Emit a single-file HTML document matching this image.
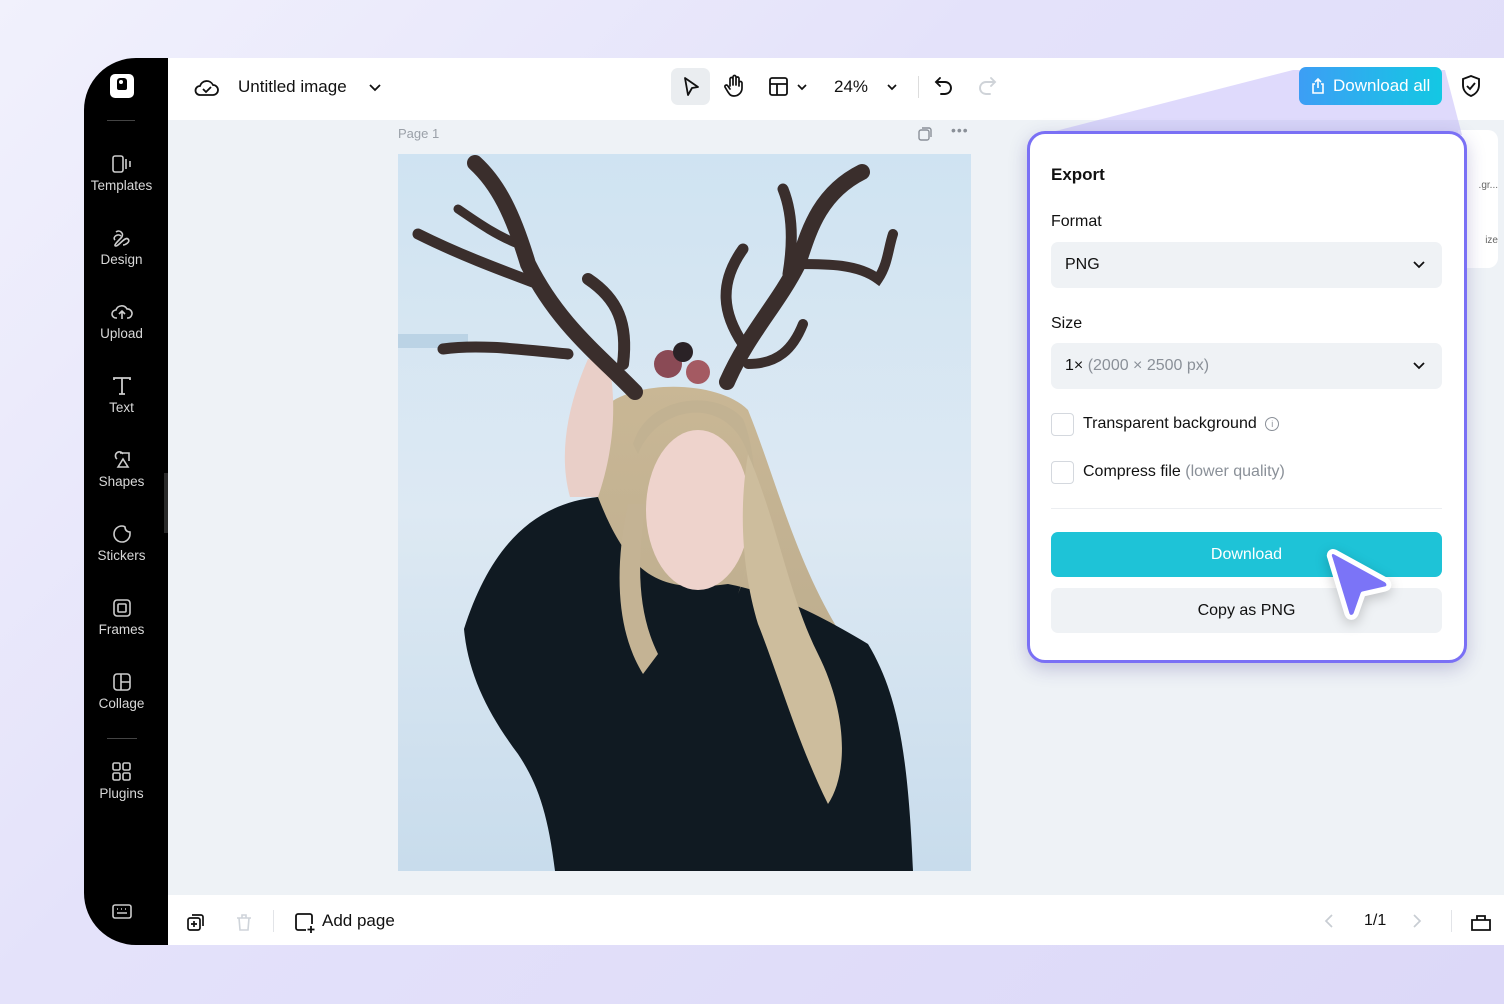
<!DOCTYPE html>
<html><head><meta charset="utf-8"><style>
*{box-sizing:border-box;margin:0;padding:0}
body{width:1504px;height:1004px;overflow:hidden;font-family:"Liberation Sans",sans-serif;background:linear-gradient(135deg,#f1f1fc 0%,#e4e2fa 40%,#dcd8f8 100%);position:relative;color:#111}
.abs{position:absolute}
.side{left:84px;top:58px;width:84px;height:887px;background:#000;border-radius:52px 0 0 52px}
.nav{position:absolute;left:0;width:75px;text-align:center;color:#d8d8d8;font-size:13.5px}
.nav svg{display:block;margin:0 auto 4px}
.top{left:168px;top:58px;width:1336px;height:62px;background:#fff}
.canvas{left:168px;top:120px;width:1336px;height:775px;background:#eef2f6}
.bottom{left:168px;top:895px;width:1336px;height:50px;background:#fff}
.panel{left:1027px;top:131px;width:440px;height:532px;background:#fff;border:3px solid #7a70f5;border-radius:18px;box-shadow:0 6px 18px rgba(60,50,140,.25)}
.sel{position:absolute;left:21px;width:391px;height:46px;background:#eff2f5;border-radius:7px;font-size:16px;line-height:46px;padding-left:14px}
.chk{position:absolute;left:21px;width:23px;height:23px;border:1.5px solid #d4d8de;border-radius:4px}
.lbl{position:absolute;left:53px;font-size:16px}
</style></head><body>
<div class="abs side">
  <div class="abs" style="left:26px;top:16px;width:24px;height:24px;background:#fff;border-radius:5px"><div style="position:absolute;left:7px;top:4px;width:10px;height:12px;background:#000;border-radius:3px 3px 2px 2px"></div><div style="position:absolute;left:9px;top:6px;width:4px;height:4px;background:#fff;border-radius:50%"></div></div>
  <div class="abs" style="left:23px;top:62px;width:28px;height:1px;background:#444"></div>
  <div class="nav" style="top:96px"><svg width="22" height="20" viewBox="0 0 22 20" fill="none" stroke="#ccc" stroke-width="1.6"><rect x="2" y="2" width="10" height="16" rx="2"/><path d="M15 5v10M19 7v6"/></svg>Templates</div>
  <div class="nav" style="top:170px"><svg width="22" height="20" viewBox="0 0 22 20" fill="none" stroke="#ccc" stroke-width="1.6"><path d="M5 4c4-3 9 2 5 6s-8 8-5 8 9-10 12-7-3 6-5 6M4 12c-3-3 3-7 6-4"/></svg>Design</div>
  <div class="nav" style="top:244px"><svg width="24" height="20" viewBox="0 0 24 20" fill="none" stroke="#ccc" stroke-width="1.6"><path d="M7 16H6a4 4 0 010-8 6 6 0 0111-1 4 4 0 011 9h-1M12 17V9M9 12l3-3 3 3"/></svg>Upload</div>
  <div class="nav" style="top:318px"><svg width="22" height="20" viewBox="0 0 22 20" fill="none" stroke="#ccc" stroke-width="1.8"><path d="M3 4V2h16v2M11 2v16M8 18h6"/></svg>Text</div>
  <div class="nav" style="top:392px"><svg width="22" height="20" viewBox="0 0 22 20" fill="none" stroke="#ccc" stroke-width="1.6"><path d="M6 9a4 4 0 116-5M9 3h9v8M7 17l5-8 5 8z"/></svg>Shapes</div>
  <div class="nav" style="top:466px"><svg width="22" height="20" viewBox="0 0 22 20" fill="none" stroke="#ccc" stroke-width="1.6"><path d="M19 10a8 8 0 11-8-8c1 0 2 0 3 1 0 3 2 5 5 5z"/></svg>Stickers</div>
  <div class="nav" style="top:540px"><svg width="22" height="20" viewBox="0 0 22 20" fill="none" stroke="#ccc" stroke-width="1.6"><rect x="3" y="2" width="16" height="16" rx="3"/><rect x="7" y="6" width="8" height="8" rx="1"/></svg>Frames</div>
  <div class="nav" style="top:614px"><svg width="22" height="20" viewBox="0 0 22 20" fill="none" stroke="#ccc" stroke-width="1.6"><rect x="3" y="2" width="16" height="16" rx="3"/><path d="M10 2v16M10 10h9"/></svg>Collage</div>
  <div class="abs" style="left:23px;top:680px;width:30px;height:1px;background:#444"></div>
  <div class="nav" style="top:704px"><svg width="22" height="20" viewBox="0 0 22 20" fill="none" stroke="#ccc" stroke-width="1.6"><rect x="2" y="1" width="7" height="7" rx="1.5"/><rect x="12" y="1" width="7" height="7" rx="1.5"/><rect x="2" y="11" width="7" height="7" rx="1.5"/><rect x="12" y="11" width="7" height="7" rx="1.5"/></svg>Plugins</div>
  <svg class="abs" style="left:27px;top:845px" width="22" height="18" viewBox="0 0 22 18" fill="none" stroke="#ccc" stroke-width="1.6"><rect x="2" y="2" width="18" height="13" rx="2"/><path d="M6 6h1M10 6h1M14 6h1M6 10h10"/></svg>
</div>
<div class="abs" style="left:164px;top:473px;width:11px;height:60px;background:#2a2a2a;border-radius:0 8px 8px 0"></div>
<div class="abs top">
  <svg class="abs" style="left:26px;top:18px" width="26" height="22" viewBox="0 0 26 22" fill="none" stroke="#111" stroke-width="1.8"><path d="M7 19H6a4.5 4.5 0 010-9 7 7 0 0113-1 5 5 0 010 10z"/><path d="M9 13l3 3 5-5"/></svg>
  <div class="abs" style="left:70px;top:19px;font-size:17px;font-weight:500">Untitled image</div>
  <svg class="abs" style="left:200px;top:22px" width="14" height="14" viewBox="0 0 14 14" fill="none" stroke="#111" stroke-width="1.8"><path d="M2 5l5 5 5-5"/></svg>
  <div class="abs" style="left:503px;top:10px;width:39px;height:37px;background:#eaedf0;border-radius:7px"></div>
  <svg class="abs" style="left:512px;top:17px" width="22" height="24" viewBox="0 0 22 24" fill="none" stroke="#111" stroke-width="1.8" stroke-linejoin="round"><path d="M5 3l13 9-6 1-4 7z"/></svg>
  <svg class="abs" style="left:555px;top:16px" width="22" height="24" viewBox="0 0 22 24" fill="none" stroke="#111" stroke-width="1.7" stroke-linecap="round"><path d="M7 12V5a1.5 1.5 0 013 0v6M10 10V3a1.5 1.5 0 013 0v8M13 10V4.5a1.5 1.5 0 013 0V12M16 9a1.5 1.5 0 013 0v5a8 8 0 01-8 8c-3 0-4-1-6-4l-3-5a1.5 1.5 0 012.5-1.5L7 15"/></svg>
  <svg class="abs" style="left:600px;top:18px" width="22" height="22" viewBox="0 0 22 22" fill="none" stroke="#111" stroke-width="1.8"><rect x="2" y="2" width="17" height="17" rx="2"/><path d="M2 8h17M9 8v11"/></svg>
  <svg class="abs" style="left:628px;top:23px" width="12" height="12" viewBox="0 0 12 12" fill="none" stroke="#111" stroke-width="1.7"><path d="M2 4l4 4 4-4"/></svg>
  <div class="abs" style="left:666px;top:19px;font-size:17px;font-weight:500">24%</div>
  <svg class="abs" style="left:718px;top:23px" width="12" height="12" viewBox="0 0 12 12" fill="none" stroke="#111" stroke-width="1.7"><path d="M2 4l4 4 4-4"/></svg>
  <div class="abs" style="left:750px;top:18px;width:1px;height:22px;background:#ddd"></div>
  <svg class="abs" style="left:765px;top:17px" width="22" height="22" viewBox="0 0 22 22" fill="none" stroke="#111" stroke-width="1.9" stroke-linecap="round"><path d="M7 3L3 7l4 4M3 7h9a6 6 0 010 12H8"/></svg>
  <svg class="abs" style="left:808px;top:17px" width="22" height="22" viewBox="0 0 22 22" fill="none" stroke="#cfd3d8" stroke-width="1.9" stroke-linecap="round"><path d="M15 3l4 4-4 4M19 7h-9a6 6 0 000 12h4"/></svg>
  <svg class="abs" style="left:1292px;top:16px" width="22" height="24" viewBox="0 0 22 24" fill="none" stroke="#111" stroke-width="1.9"><path d="M11 2l8 3v6c0 5-3 9-8 11-5-2-8-6-8-11V5z"/><path d="M7 12l3 3 5-6"/></svg>
</div>
<div class="abs canvas">
  <div class="abs" style="left:230px;top:6px;font-size:13px;color:#9aa0a8">Page 1</div>
  <svg class="abs" style="left:748px;top:5px" width="18" height="18" viewBox="0 0 18 18" fill="none" stroke="#8a9098" stroke-width="1.4"><rect x="3" y="5" width="10" height="10" rx="2"/><path d="M6 3h7a2 2 0 012 2v7"/></svg>
  <div class="abs" style="left:783px;top:2px;font-size:14px;color:#8a9098;letter-spacing:1px">•••</div>
  <div class="abs" style="left:1290px;top:10px;width:40px;height:138px;background:#fff;border-radius:0 10px 10px 0;font-size:10px;color:#666;padding-top:50px;text-align:right">.gr...<br><br><br><br><br>ize</div>
</div>
<svg class="abs" style="left:398px;top:154px" width="573" height="717" viewBox="0 0 573 717" preserveAspectRatio="none">
  <defs><linearGradient id="bg" x1="0" y1="0" x2="0" y2="1"><stop offset="0" stop-color="#cfe3f2"/><stop offset=".5" stop-color="#dde9f3"/><stop offset="1" stop-color="#c8dcec"/></linearGradient>
  <linearGradient id="hr" x1="0" y1="0" x2="0" y2="1"><stop offset="0" stop-color="#c9b795"/><stop offset="1" stop-color="#b8a98c"/></linearGradient></defs>
  <rect width="573" height="717" fill="url(#bg)"/>
  <rect x="0" y="180" width="70" height="14" fill="#9fc0d8" opacity=".5"/>
  <path d="M204 256 C230 225 320 225 350 256 C380 330 400 420 456 500 C470 560 460 600 456 640 L230 560 C200 450 190 330 204 256Z" fill="url(#hr)"/>
  <path d="M66 475 C90 400 130 350 200 343 C230 420 260 440 330 430 C380 440 420 460 470 490 C500 540 510 600 515 717 L157 717 C150 660 140 630 120 600 C90 560 70 520 66 475Z" fill="#101a22"/>
  <path d="M172 343 C160 300 170 250 190 205 L210 205 C220 250 215 300 200 343Z" fill="#e9cfc8"/>
  <ellipse cx="300" cy="356" rx="52" ry="80" fill="#eed3cc"/>
  <path d="M240 300 C260 250 330 240 350 300 C360 340 355 400 340 440 C365 380 360 300 345 265 C320 235 250 240 235 290Z" fill="#c2b292"/>
  <path d="M350 300 C380 370 390 440 420 500 C450 560 450 620 430 650 C400 590 380 520 360 470 C345 420 340 360 350 300Z" fill="#cdbd9d"/>
  <path d="M230 350 C215 420 220 480 245 520 L260 500 C240 460 238 410 248 350Z" fill="#c4b394"/>
  <g fill="none" stroke="#3a2e2c" stroke-linecap="round">
    <path d="M237 238 C200 200 160 170 130 110 C115 60 100 30 77 9" stroke-width="16"/>
    <path d="M170 200 C120 195 80 190 45 195" stroke-width="11"/>
    <path d="M140 130 C100 115 60 100 20 80" stroke-width="11"/>
    <path d="M120 90 C95 80 75 65 60 55" stroke-width="9"/>
    <path d="M225 210 C230 170 220 145 190 125" stroke-width="12"/>
    <path d="M329 228 C350 180 380 150 400 110 C410 80 420 40 464 18" stroke-width="16"/>
    <path d="M345 190 C325 160 320 130 345 95" stroke-width="11"/>
    <path d="M390 120 C395 90 395 60 385 35" stroke-width="11"/>
    <path d="M400 110 C430 110 460 110 480 125 C490 110 490 95 495 80" stroke-width="10"/>
    <path d="M350 210 C380 210 395 195 405 170" stroke-width="10"/>
  </g>
  <circle cx="270" cy="210" r="14" fill="#8a4a55"/><circle cx="300" cy="218" r="12" fill="#a45a62"/><circle cx="285" cy="198" r="10" fill="#2a2226"/>
</svg>
<div class="abs bottom">
  <svg class="abs" style="left:18px;top:17px" width="20" height="20" viewBox="0 0 20 20" fill="none" stroke="#111" stroke-width="1.7"><rect x="2" y="6" width="12" height="12" rx="2"/><path d="M6 3h9a2 2 0 012 2v9M8 9v6M5 12h6"/></svg>
  <svg class="abs" style="left:66px;top:17px" width="20" height="20" viewBox="0 0 20 20" fill="none" stroke="#cfd4da" stroke-width="1.6"><path d="M3 6h14M5 6l1 12h8l1-12M8 6V3h4v3"/></svg>
  <div class="abs" style="left:105px;top:15px;width:1px;height:22px;background:#e2e4e8"></div>
  <svg class="abs" style="left:126px;top:17px" width="22" height="22" viewBox="0 0 22 22" fill="none" stroke="#111" stroke-width="1.8"><path d="M12 18H4a2 2 0 01-2-2V4a2 2 0 012-2h12a2 2 0 012 2v8M17 14v7M13.5 17.5h7"/></svg>
  <div class="abs" style="left:154px;top:16px;font-size:17px;font-weight:500">Add page</div>
  <svg class="abs" style="left:1154px;top:18px" width="14" height="16" viewBox="0 0 14 16" fill="none" stroke="#c8cdd3" stroke-width="1.7"><path d="M10 2L4 8l6 6"/></svg>
  <div class="abs" style="left:1196px;top:17px;font-size:16px;font-weight:500">1/1</div>
  <svg class="abs" style="left:1242px;top:18px" width="14" height="16" viewBox="0 0 14 16" fill="none" stroke="#c8cdd3" stroke-width="1.7"><path d="M4 2l6 6-6 6"/></svg>
  <div class="abs" style="left:1283px;top:15px;width:1px;height:22px;background:#e2e4e8"></div>
  <svg class="abs" style="left:1302px;top:17px" width="22" height="20" viewBox="0 0 22 20" fill="none" stroke="#111" stroke-width="1.8"><path d="M2 8h18v10H2zM7 8V4h8v4"/></svg>
</div>
<svg class="abs" style="left:0;top:0" width="1504" height="1004"><polygon points="1293,70 1445,70 1462,135 1040,135" fill="#b8aef8" opacity=".45"/></svg>
<div class="abs" style="left:1299px;top:67px;width:143px;height:38px;border-radius:7px;background:linear-gradient(90deg,#3d9ef5,#13c8e3);color:#fff;font-size:17px;font-weight:500;line-height:38px;padding-left:34px">Download all
  <svg class="abs" style="left:11px;top:10px" width="16" height="18" viewBox="0 0 16 18" fill="none" stroke="#fff" stroke-width="1.6"><path d="M5 7H3v9h10V7h-2M8 11V2M5 5l3-3 3 3"/></svg></div>
<div class="abs panel">
  <div class="abs" style="left:21px;top:31px;font-size:17px;font-weight:700">Export</div>
  <div class="abs" style="left:21px;top:79px;font-size:16px;font-weight:500">Format</div>
  <div class="sel" style="top:108px">PNG<svg style="position:absolute;right:16px;top:17px" width="14" height="12" viewBox="0 0 14 12" fill="none" stroke="#111" stroke-width="1.8"><path d="M2 3l5 5 5-5"/></svg></div>
  <div class="abs" style="left:21px;top:181px;font-size:16px;font-weight:500">Size</div>
  <div class="sel" style="top:209px">1× <span style="color:#8a9098">(2000 × 2500 px)</span><svg style="position:absolute;right:16px;top:17px" width="14" height="12" viewBox="0 0 14 12" fill="none" stroke="#111" stroke-width="1.8"><path d="M2 3l5 5 5-5"/></svg></div>
  <div class="chk" style="top:279px"></div><div class="lbl" style="top:281px">Transparent background <span style="display:inline-block;width:14px;height:14px;border:1.3px solid #8a9098;border-radius:50%;font-size:9px;line-height:12px;text-align:center;color:#8a9098;vertical-align:1px;margin-left:4px">i</span></div>
  <div class="chk" style="top:327px"></div><div class="lbl" style="top:329px">Compress file <span style="color:#8a9098">(lower quality)</span></div>
  <div class="abs" style="left:21px;top:374px;width:391px;height:1px;background:#eceef1"></div>
  <div class="abs" style="left:21px;top:398px;width:391px;height:45px;background:#1ec3d7;border-radius:7px;color:#fff;font-size:16px;font-weight:500;text-align:center;line-height:45px">Download</div>
  <div class="abs" style="left:21px;top:454px;width:391px;height:45px;background:#eff2f5;border-radius:7px;font-size:16px;font-weight:500;text-align:center;line-height:45px">Copy as PNG</div>
  <svg class="abs" style="left:293px;top:408px;filter:drop-shadow(0 4px 6px rgba(0,0,0,.2))" width="70" height="80" viewBox="0 0 70 80"><path d="M12 10 C8 8 5 12 7 16 L24 72 C26 77 31 76 33 72 L40 52 L62 47 C67 46 67 41 63 38Z" fill="#7b74f7" stroke="#fff" stroke-width="5" stroke-linejoin="round"/></svg>
</div>
</body></html>
